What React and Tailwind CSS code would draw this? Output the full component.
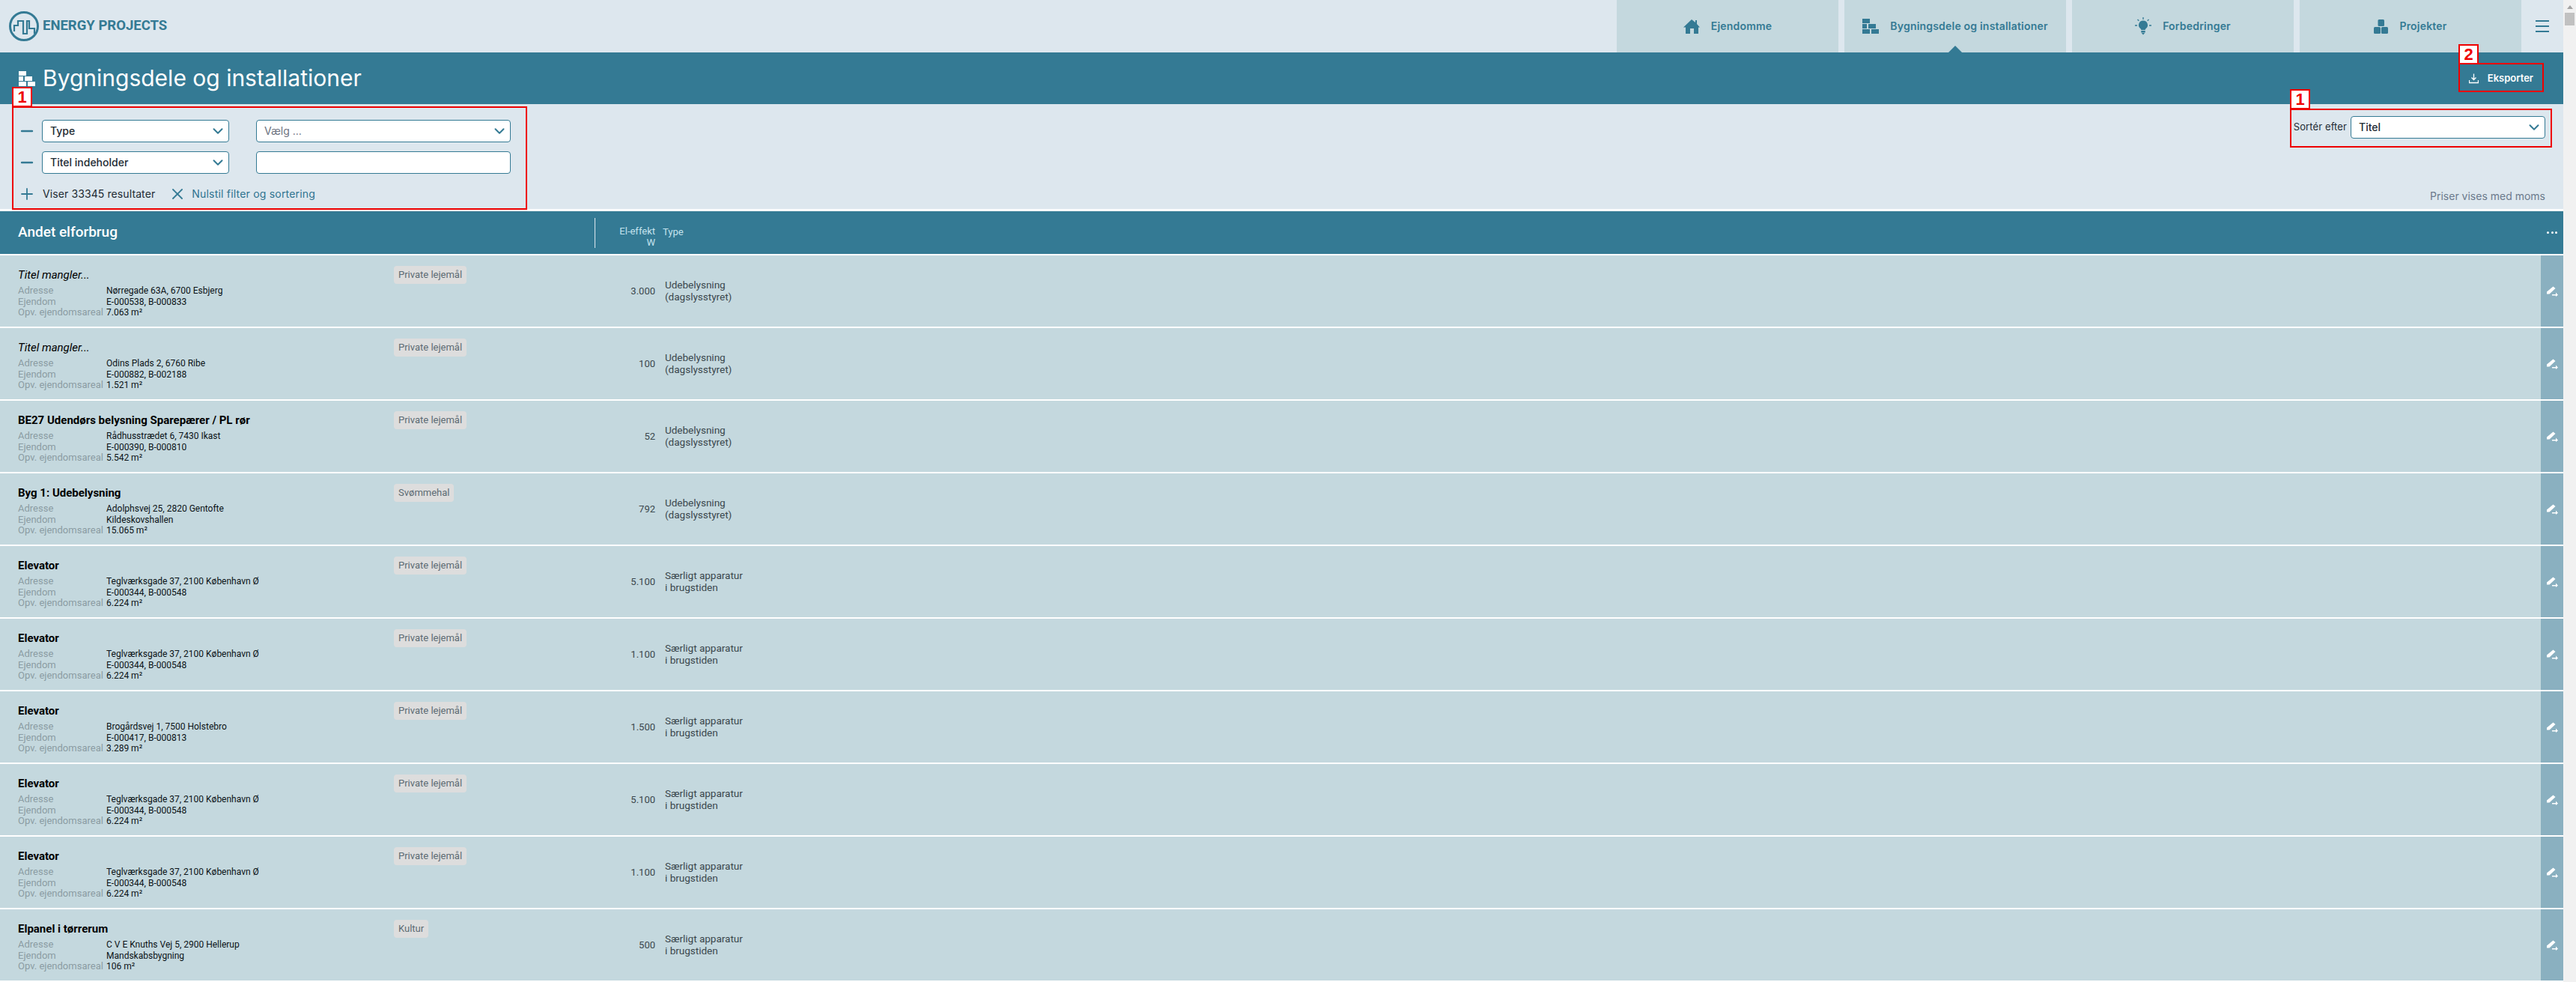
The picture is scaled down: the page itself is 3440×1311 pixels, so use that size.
import React from 'react';
import { ChevronDown, Minus, Plus, X } from 'lucide-react';

const rows = [
  { title: 'Titel mangler...', missing: true, tag: 'Private lejemål', address: 'Nørregade 63A, 6700 Esbjerg', property: 'E-000538, B-000833', area: '7.063 m²', watt: '3.000', type: ['Udebelysning', '(dagslysstyret)'] },
  { title: 'Titel mangler...', missing: true, tag: 'Private lejemål', address: 'Odins Plads 2, 6760 Ribe', property: 'E-000882, B-002188', area: '1.521 m²', watt: '100', type: ['Udebelysning', '(dagslysstyret)'] },
  { title: 'BE27 Udendørs belysning Sparepærer / PL rør', tag: 'Private lejemål', address: 'Rådhusstrædet 6, 7430 Ikast', property: 'E-000390, B-000810', area: '5.542 m²', watt: '52', type: ['Udebelysning', '(dagslysstyret)'] },
  { title: 'Byg 1: Udebelysning', tag: 'Svømmehal', address: 'Adolphsvej 25, 2820 Gentofte', property: 'Kildeskovshallen', area: '15.065 m²', watt: '792', type: ['Udebelysning', '(dagslysstyret)'] },
  { title: 'Elevator', tag: 'Private lejemål', address: 'Teglværksgade 37, 2100 København Ø', property: 'E-000344, B-000548', area: '6.224 m²', watt: '5.100', type: ['Særligt apparatur', 'i brugstiden'] },
  { title: 'Elevator', tag: 'Private lejemål', address: 'Teglværksgade 37, 2100 København Ø', property: 'E-000344, B-000548', area: '6.224 m²', watt: '1.100', type: ['Særligt apparatur', 'i brugstiden'] },
  { title: 'Elevator', tag: 'Private lejemål', address: 'Brogårdsvej 1, 7500 Holstebro', property: 'E-000417, B-000813', area: '3.289 m²', watt: '1.500', type: ['Særligt apparatur', 'i brugstiden'] },
  { title: 'Elevator', tag: 'Private lejemål', address: 'Teglværksgade 37, 2100 København Ø', property: 'E-000344, B-000548', area: '6.224 m²', watt: '5.100', type: ['Særligt apparatur', 'i brugstiden'] },
  { title: 'Elevator', tag: 'Private lejemål', address: 'Teglværksgade 37, 2100 København Ø', property: 'E-000344, B-000548', area: '6.224 m²', watt: '1.100', type: ['Særligt apparatur', 'i brugstiden'] },
  { title: 'Elpanel i tørrerum', tag: 'Kultur', address: 'C V E Knuths Vej 5, 2900 Hellerup', property: 'Mandskabsbygning', area: '106 m²', watt: '500', type: ['Særligt apparatur', 'i brugstiden'] },
];

function Logo() {
  return (
    <svg width="40" height="40" viewBox="0 0 40 40" fill="none" stroke="#347a94">
      <circle cx="20" cy="20" r="18.5" strokeWidth="3" />
      <path d="M7 27v-8h5v-6h7v17h5V13h3v10h7v7" strokeWidth="2.2" fill="none" />
    </svg>
  );
}

function HouseIcon() {
  return (
    <svg width="22" height="19" viewBox="0 0 22 19" fill="#347a94">
      <path d="M11 0l5 4V1h2v5l4 4.5h-2V19h-6v-7H9v7H3V10.500H0z" />
    </svg>
  );
}

function BricksIcon({ color = '#347a94' }) {
  return (
    <svg width="22" height="20" viewBox="0 0 22 20" fill={color}>
      <rect x="0" y="0" width="10" height="6" />
      <rect x="0" y="7" width="6" height="6" />
      <rect x="8" y="7" width="10" height="6" />
      <rect x="0" y="14" width="10" height="6" />
      <rect x="12" y="14" width="10" height="6" />
    </svg>
  );
}

function BulbIcon() {
  return (
    <svg width="22" height="24" viewBox="0 0 22 24" fill="#347a94">
      <path d="M11 4.500a6 6 0 0 1 3.600 10.800c-.6.500-.9 1-.9 1.700H8.300c0-.7-.3-1.200-.9-1.700A6 6 0 0 1 11 4.500z" />
      <rect x="8.300" y="18" width="5.400" height="2.500" />
      <path d="M8.800 21h4.400L11 23.500z" />
      <path d="M11 0v3M3.500 3l1.800 1.800M18.500 3l-1.800 1.800M0 11h3M19 11h3" stroke="#347a94" strokeWidth="1.300" />
    </svg>
  );
}

function BlocksIcon() {
  return (
    <svg width="19" height="19" viewBox="0 0 19 19" fill="#347a94">
      <rect x="5.500" y="0" width="8.500" height="9" rx="1.500" />
      <rect x="0" y="10" width="9" height="9" rx="1.500" />
      <rect x="10" y="10" width="9" height="9" rx="1.500" />
    </svg>
  );
}

function EditMoveIcon() {
  return (
    <svg width="16" height="14" viewBox="0 0 16 14" fill="#ffffff">
      <path d="M9.500 0.500l3 2.500-8 7.500H1v-3z" />
      <path d="M8 11h5V8.500l3 3.200-3 2.300v-1.600H8z" />
    </svg>
  );
}

function ExportIcon() {
  return (
    <svg width="13" height="14" viewBox="0 0 13 14" fill="none" stroke="#ffffff" strokeWidth="1.300">
      <path d="M6.500 0.500v7.500M3.500 5.500l3 3 3-3" />
      <path d="M0.500 9v3.500h12V9" />
    </svg>
  );
}

function SelectBox({ label, placeholder, className }) {
  return (
    <div className={`flex h-[30px] items-center justify-between rounded border border-[#347a94] bg-white pl-[10px] pr-[3px] text-sm font-medium ${className}`}>
      <span className={placeholder ? 'font-normal text-[#6b7280]' : 'text-[#222b33]'}>{label}</span>
      <ChevronDown size={22} strokeWidth={2.2} color="#347a94" />
    </div>
  );
}

function Marker({ number, className, boxClassName }) {
  return (
    <>
      <div className={`pointer-events-none absolute border-[2.500px] border-[#ee0000] ${boxClassName}`} />
      <div className={`absolute flex h-[27px] w-[27px] items-center justify-center border-[2.500px] border-[#ee0000] bg-white text-[22px] font-bold text-[#ee0000] ${className}`}
        style={{ fontFamily: '"Liberation Sans", sans-serif' }}>
        {number}
      </div>
    </>
  );
}

function Tab({ icon, label, active }) {
  return (
    <div className="relative flex h-full w-[296px] items-center justify-center gap-[15px] bg-[#c4d8de] text-sm font-semibold tracking-[0.2px] text-[#347a94]">
      {icon}
      <span>{label}</span>
      {active && (
        <div className="absolute bottom-0 left-[139px] h-0 w-0 border-x-[9px] border-b-[9px] border-x-transparent border-b-[#347a94]" />
      )}
    </div>
  );
}

function Row({ row }) {
  return (
    <div className="mb-[2px] flex h-[95px] shrink-0 bg-[#c4d8de] text-[13px]" style={{ fontFamily: 'Roboto, sans-serif' }}>
      <div className="w-[526px] pl-6 pt-[16px]">
        <div className={`h-[21px] text-[15px] leading-[21px] text-black ${row.missing ? 'italic' : 'font-bold'}`}>{row.title}</div>
        <div className="mt-[3px] grid grid-cols-[118px_1fr] leading-[14.500px]">
          <span className="text-[#8b9ca3]">Adresse</span>
          <span className="text-[12px] text-[#0b1216]">{row.address}</span>
          <span className="text-[#8b9ca3]">Ejendom</span>
          <span className="text-[12px] text-[#0b1216]">{row.property}</span>
          <span className="text-[#8b9ca3]">Opv. ejendomsareal</span>
          <span className="text-[12px] text-[#0b1216]">{row.area}</span>
        </div>
      </div>
      <div className="w-[274px] pt-[14px]">
        <span className="inline-block h-6 rounded bg-[#dddddd] px-[6px] leading-6 text-[#5c6b73]">{row.tag}</span>
      </div>
      <div className="flex w-[75px] items-center justify-end pt-[1px] text-[#3b474d]">{row.watt}</div>
      <div className="ml-[13px] flex-1 self-center text-[13.500px] leading-[15.500px] text-[#3b474d]">
        {row.type.map((line) => (
          <div key={line}>{line}</div>
        ))}
      </div>
      <div className="flex w-[30px] items-center justify-center bg-[#8ab0c0]">
        <EditMoveIcon />
      </div>
    </div>
  );
}

function App() {
  return (
    <div className="relative flex h-screen overflow-hidden bg-[#f1f1f1]" style={{ fontFamily: 'Inter, sans-serif' }}>
      <div className="flex min-w-0 flex-1 flex-col bg-white">
        <header className="flex h-[70px] shrink-0 items-center bg-[#dde7ee]">
          <div className="flex flex-1 items-center gap-[5px] pl-3">
            <Logo />
            <span className="text-[18.500px] font-bold text-[#347a94]" style={{ fontFamily: 'Roboto, sans-serif' }}>ENERGY PROJECTS</span>
          </div>
          <nav className="flex h-full gap-2">
            <Tab icon={<HouseIcon />} label="Ejendomme" />
            <Tab icon={<BricksIcon />} label="Bygningsdele og installationer" active />
            <Tab icon={<BulbIcon />} label="Forbedringer" />
            <Tab icon={<BlocksIcon />} label="Projekter" />
          </nav>
          <div className="flex w-[56px] justify-center pr-[1px]">
            <div className="flex w-[18px] flex-col gap-[5px]">
              <div className="h-[2px] bg-[#347a94]" />
              <div className="h-[2px] bg-[#347a94]" />
              <div className="h-[2px] bg-[#347a94]" />
            </div>
          </div>
        </header>

        <div className="flex h-[69px] shrink-0 items-center justify-between bg-[#347a94] pl-[25px] pr-[40px]">
          <div className="flex items-center gap-[10px] text-white">
            <BricksIcon color="#ffffff" />
            <h1 className="text-[30px] font-normal">Bygningsdele og installationer</h1>
          </div>
          <div className="flex items-center gap-3 pt-[1px] text-[13px] font-semibold text-white">
            <ExportIcon />
            <span>Eksporter</span>
          </div>
        </div>

        <section className="flex h-[140px] shrink-0 justify-between bg-[#dde7ee] pl-6 pr-6 pt-[21px]">
          <div>
            <div className="flex items-center">
              <Minus size={24} color="#347a94" strokeWidth={2.400} />
              <SelectBox label="Type" className="ml-2 w-[250px]" />
              <SelectBox label="Vælg ..." placeholder className="ml-[36px] w-[340px]" />
            </div>
            <div className="mt-3 flex items-center">
              <Minus size={24} color="#347a94" strokeWidth={2.400} />
              <SelectBox label="Titel indeholder" className="ml-2 w-[250px]" />
              <div className="ml-[36px] h-[30px] w-[340px] rounded border border-[#347a94] bg-white" />
            </div>
            <div className="mt-[15px] flex items-center text-sm">
              <Plus size={24} color="#347a94" strokeWidth={1.800} />
              <span className="ml-[9px] tracking-[0.1px] text-[#222b33]">Viser 33345 resultater</span>
              <X size={24} color="#347a94" strokeWidth={1.800} className="ml-[18px]" />
              <span className="ml-[7px] tracking-[0.2px] text-[#2f7390]">Nulstil filter og sortering</span>
            </div>
          </div>
          <div className="flex flex-col items-end">
            <div className="mt-[-5px] flex items-center gap-[5px]">
              <span className="text-[13px] tracking-[0.1px] text-[#222b33]">Sortér efter</span>
              <SelectBox label="Titel" className="w-[260px]" />
            </div>
            <div className="mt-[67px] text-sm text-[#6b7a8c]">Priser vises med moms</div>
          </div>
        </section>

        <div className="mt-[3px] flex h-[57px] shrink-0 items-center bg-[#347a94] pl-6 text-white">
          <div className="w-[770px] text-[19px] font-medium" style={{ fontFamily: 'Roboto, sans-serif' }}>Andet elforbrug</div>
          <div className="h-10 w-px bg-[#dde7ee]" />
          <div className="w-[80px] pt-[11px] text-right text-[13px] leading-[15px] text-[#c4e3ee]" style={{ fontFamily: 'Roboto, sans-serif' }}>
            <div>El-effekt</div>
            <div>W</div>
          </div>
          <div className="ml-[10px] flex-1 pb-[2px] text-[13px] text-[#c4e3ee]" style={{ fontFamily: 'Roboto, sans-serif' }}>Type</div>
          <div className="flex w-[30px] justify-center gap-[2.500px]">
            <div className="h-[3px] w-[3px] rounded-full bg-white" />
            <div className="h-[3px] w-[3px] rounded-full bg-white" />
            <div className="h-[3px] w-[3px] rounded-full bg-white" />
          </div>
        </div>

        <div className="mt-[2px] flex min-h-0 flex-1 flex-col overflow-hidden">
          {rows.map((row, i) => (
            <Row key={i} row={row} />
          ))}
        </div>
      </div>

      <div className="flex w-[17px] shrink-0 flex-col items-center bg-[#f1f1f1]">
        <div className="mt-[7px] h-0 w-0 border-x-[4px] border-b-[5px] border-x-transparent border-b-[#a3a3a3]" />
        <div className="mt-[5px] h-[17px] w-[13px] bg-[#c1c1c1]" />
      </div>

      <Marker number="1" className="left-[16px] top-[116px]" boxClassName="left-[16px] top-[142px] h-[138px] w-[688px]" />
      <Marker number="1" className="left-[3058px] top-[118.500px]" boxClassName="left-[3058px] top-[145px] h-[52px] w-[350px]" />
      <Marker number="2" className="left-[3283px] top-[59px]" boxClassName="left-[3283px] top-[84px] h-[39px] w-[114px]" />
    </div>
  );
}

export default App;
